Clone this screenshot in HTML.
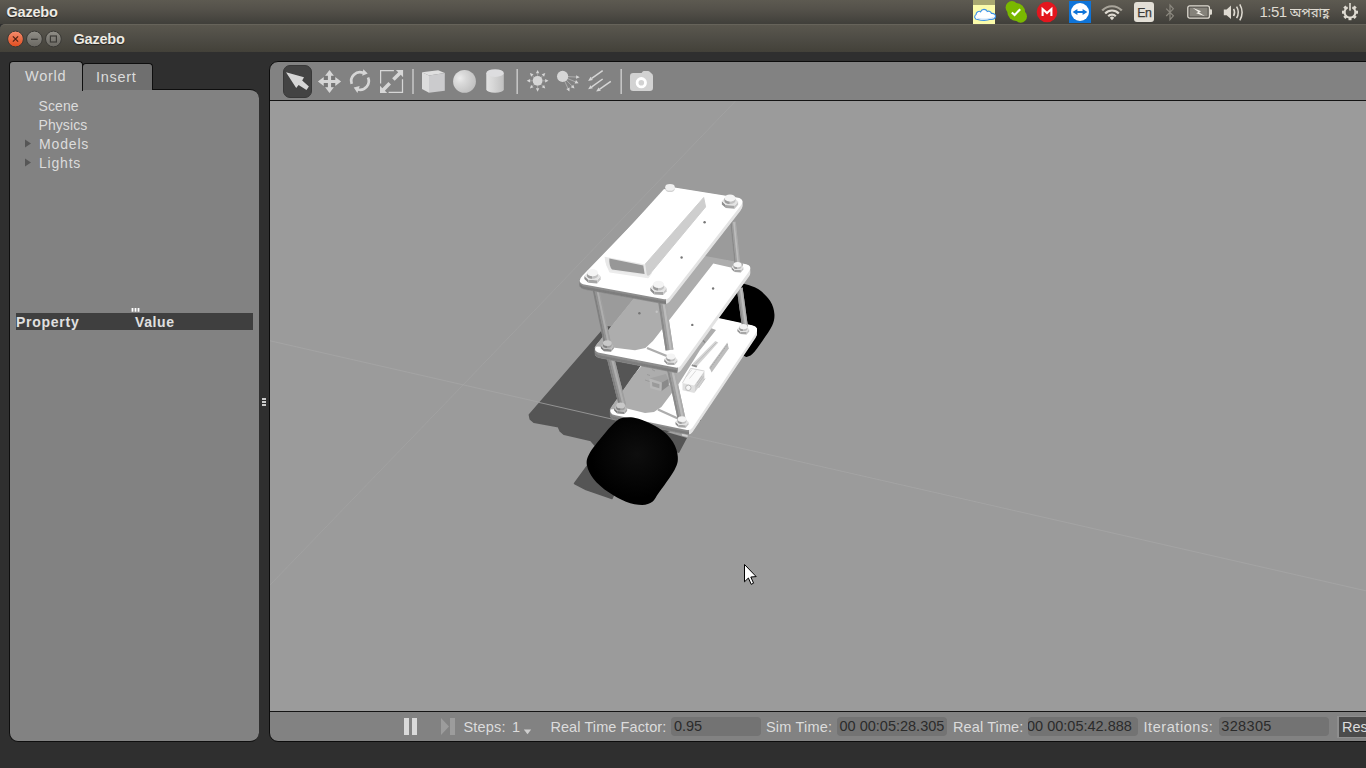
<!DOCTYPE html>
<html lang="en">
<head>
<meta charset="utf-8">
<title>Gazebo</title>
<style>
*{box-sizing:border-box;margin:0;padding:0}
html,body{width:1366px;height:768px;overflow:hidden;background:#2f2f2f}
body{position:relative;font-family:"Liberation Sans","DejaVu Sans",sans-serif;font-size:14px;color:#dcdcdc;-webkit-font-smoothing:antialiased}
.abs{position:absolute}
.t{position:absolute;white-space:nowrap;line-height:1}
#topbar{position:absolute;left:0;top:0;width:1366px;height:24px;background:linear-gradient(#5d5a51,#54514a 40%,#403f3a)}
#titlebar{position:absolute;left:0;top:24px;width:1366px;height:28px;background:linear-gradient(#5a574e,#4e4c45 50%,#434139);border-top:1px solid #66635a;border-radius:5px 0 0 0}
.wtitle{font-weight:bold;color:#eeebe4;text-shadow:0 1px 1px rgba(0,0,0,.55)}
/* left panel */
#pane{position:absolute;left:9px;top:89px;width:250px;height:653px;background:#828282;border:1px solid #0e0e0e;border-right:none;border-radius:0 9px 9px 9px}
.tab{position:absolute;border:1px solid #0e0e0e;border-bottom:none;border-radius:4px 4px 0 0}
#tabW{left:9px;top:61px;width:74px;height:30px;background:#828282}
#tabI{left:82px;top:63px;width:71px;height:27px;background:#6f6f6f}
#phead{position:absolute;left:16px;top:313px;width:237px;height:17px;background:#3f3f3f}
/* render frame */
#frame{position:absolute;left:269px;top:61px;width:1110px;height:681px;background:#828282;border:1px solid #0c0c0c;border-radius:9px;overflow:hidden}
#scene{position:absolute;left:0;top:39px;width:1108px;height:610px;background:#9b9b9b}
.hl{position:absolute;left:0;width:1108px;height:1px;background:#141414}
.bl{font-size:14.5px;color:#dcdcdc}
.fld{font-size:14.5px;position:absolute;top:655px;height:19px;background:#737373;border-radius:4px;color:#2b2b2b}
</style>
</head>
<body>
<div id="topbar">
  <span class="t wtitle" id="tt1" style="letter-spacing:-0.2px;margin-left:0.5px;left:6px;top:5px;font-size:14.5px">Gazebo</span>
  <!-- cloud indicator -->
  <div class="abs" style="left:973px;top:0;width:22px;height:24px;background:#fbfbaa"></div>
  <div class="abs" style="left:973px;top:0;width:22px;height:5px;background:#a9a870"></div>
  <svg class="abs" style="left:973px;top:5px" width="23" height="19" viewBox="0 0 23 19">
    <path d="M4.5 14.5 C1.5 14.5 0.8 11 3 9.6 C3.2 6.8 6 5.6 7.6 6.8 C8.8 3.6 13 3.6 14.2 6.4 C16 5.6 18.2 6.6 18.4 8.4 C21.4 8.2 23 10.2 22.4 12 C21.8 14 19.5 14.6 17.5 14.3 C14 15.6 8 15.4 4.5 14.5Z" fill="#fff" stroke="#3d93e6" stroke-width="1.1"/>
    <path d="M4 12.5 C8 14 16 14 21 11.5 C20.6 13.4 18.5 13.9 17.4 13.6 C14 14.9 8 14.7 4.6 13.8Z" fill="#cfe3f7"/>
  </svg>
  <!-- green status blob -->
  <svg class="abs" style="left:1004px;top:0" width="24" height="24" viewBox="0 0 24 24">
    <g fill="#7ab800"><circle cx="12.200" cy="12" r="8.900"/><circle cx="7.900" cy="7.400" r="6.300"/><circle cx="16.700" cy="16.400" r="6.300"/></g>
    <path d="M7.8 12.4 L10.6 15 L16.2 9.2" fill="none" stroke="#fff" stroke-width="2.1"/>
  </svg>
  <!-- red M -->
  <svg class="abs" style="left:1036px;top:1px" width="22" height="22" viewBox="0 0 22 22">
    <circle cx="11" cy="11" r="10.3" fill="#e3161e"/>
    <path d="M6.6 15 V8 L11 12 L15.4 8 V15" fill="none" stroke="#fff" stroke-width="2.1" stroke-linejoin="miter"/>
  </svg>
  <!-- teamviewer -->
  <svg class="abs" style="left:1069px;top:1px" width="22" height="22" viewBox="0 0 22 22">
    <rect width="22" height="22" fill="#0f74d8"/>
    <circle cx="11" cy="11" r="9" fill="#fff"/>
    <path d="M3.6 11 L8.4 8 V10 H13.6 V8 L18.4 11 L13.6 14 V12 H8.4 V14Z" fill="#0f74d8"/>
  </svg>
  <!-- wifi -->
  <svg class="abs" style="left:1101px;top:4px" width="22" height="17" viewBox="0 0 22 17">
    <g fill="none" stroke-linecap="butt">
      <path d="M1.2 6.6 A13.2 13.2 0 0 1 20.8 6.6" stroke="#a9a59b" stroke-width="2.2"/>
      <path d="M4.2 9.4 A9.4 9.4 0 0 1 17.8 9.4" stroke="#dfdbd2" stroke-width="2.2"/>
      <path d="M7.2 12.2 A5.4 5.4 0 0 1 14.8 12.2" stroke="#dfdbd2" stroke-width="2.2"/>
    </g>
    <path d="M8.8 13.8 A3 3 0 0 1 13.2 13.8 L11 16.2Z" fill="#dfdbd2"/>
  </svg>
  <!-- En -->
  <div class="abs" style="left:1134px;top:2px;width:20px;height:20px;background:#e3dfd6;border-radius:3px"></div>
  <span class="t" style="left:1137.2px;top:6.5px;font-size:12.3px;color:#3c3b37;letter-spacing:-0.4px;-webkit-text-stroke:0.25px #3c3b37">En</span>
  <!-- bluetooth -->
  <svg class="abs" style="left:1164px;top:3px" width="12" height="19" viewBox="0 0 12 19">
    <path d="M2.2 5.6 L9.4 12.8 L6 16.6 V2 L9.4 5.8 L2.2 13" fill="none" stroke="#8b887f" stroke-width="1.2"/>
  </svg>
  <!-- battery -->
  <svg class="abs" style="left:1187px;top:5px" width="26" height="14" viewBox="0 0 26 14">
    <rect x="0.8" y="0.8" width="21.6" height="12.4" rx="2" fill="#504e48" stroke="#dfdbd2" stroke-width="1.3"/>
    <rect x="2.6" y="2.6" width="18" height="8.8" fill="#85827a"/>
    <path d="M22.8 4.2 H24 Q25 4.2 25 5.2 V8.8 Q25 9.8 24 9.8 H22.8Z" fill="#dfdbd2"/>
    <path d="M5.6 2.8 L14.2 6.2 L12 7.3 L18 11.2 L9.2 8.2 L11.4 7Z" fill="#f4f1ea"/>
  </svg>
  <!-- volume -->
  <svg class="abs" style="left:1223px;top:3px" width="22" height="19" viewBox="0 0 22 19">
    <path d="M0.8 6.6 H3.6 L8 2.6 V16 L3.6 12.2 H0.8Z" fill="#dfdbd2"/>
    <g fill="none" stroke="#dfdbd2" stroke-width="1.5">
      <path d="M10.6 5.8 Q12.6 9.4 10.6 13"/>
      <path d="M13.6 3.6 Q17 9.4 13.6 15.2"/>
      <path d="M16.8 1.4 Q21.4 9.4 16.8 17.4"/>
    </g>
  </svg>
  <span class="t" id="clock" style="left:1259.5px;top:4px;font-size:15px;letter-spacing:-0.55px;color:#dfdbd2">1:51</span>
  <span class="t" id="bn" style="left:1289.5px;top:4px;font-size:13.2px;color:#dfdbd2;font-family:'Liberation Sans','Noto Sans Bengali','FreeSans','DejaVu Sans',sans-serif;line-height:18px;width:42px;height:19px;overflow:hidden">অপরাহ্ণ</span>
  <!-- power cog -->
  <svg class="abs" style="left:1340px;top:2px" width="20" height="20" viewBox="0 0 20 20">
    <g transform="translate(10 10.2)">
      <g fill="#dfdbd2">
        <rect x="-1.5" y="-8" width="3" height="3.4" transform="rotate(45)"/>
        <rect x="-1.5" y="-8" width="3" height="3.4" transform="rotate(90)"/>
        <rect x="-1.5" y="-8" width="3" height="3.4" transform="rotate(135)"/>
        <rect x="-1.5" y="-8" width="3" height="3.4" transform="rotate(180)"/>
        <rect x="-1.5" y="-8" width="3" height="3.4" transform="rotate(225)"/>
        <rect x="-1.5" y="-8" width="3" height="3.4" transform="rotate(270)"/>
        <rect x="-1.5" y="-8" width="3" height="3.4" transform="rotate(315)"/>
      </g>
      <path d="M-2.400 -4.900 A5.450 5.450 0 1 0 2.400 -4.900" fill="none" stroke="#dfdbd2" stroke-width="1.900"/>
      <rect x="-0.800" y="-9.200" width="1.600" height="7.600" fill="#dfdbd2"/>
    </g>
  </svg>
</div>
<div id="titlebar">
  <svg class="abs" style="left:6px;top:5px" width="58" height="18" viewBox="0 0 58 18">
    <defs>
      <linearGradient id="gc" x1="0" y1="0" x2="0" y2="1"><stop offset="0" stop-color="#f58d6e"/><stop offset="1" stop-color="#df4c1e"/></linearGradient>
      <linearGradient id="gg" x1="0" y1="0" x2="0" y2="1"><stop offset="0" stop-color="#918f88"/><stop offset="1" stop-color="#6a6862"/></linearGradient>
    </defs>
    <circle cx="9.5" cy="9" r="7.9" fill="url(#gc)" stroke="#3a3935" stroke-width="1"/>
    <path d="M6.9 6.4 L12.1 11.6 M12.1 6.4 L6.9 11.6" stroke="#4e2214" stroke-width="1.3"/>
    <circle cx="28.4" cy="9" r="7.9" fill="url(#gg)" stroke="#3a3935" stroke-width="1"/>
    <path d="M25 9.3 H31.8" stroke="#3c3b37" stroke-width="1.3"/>
    <circle cx="47.4" cy="9" r="7.9" fill="url(#gg)" stroke="#3a3935" stroke-width="1"/>
    <rect x="44.4" y="6" width="6" height="6" fill="none" stroke="#3c3b37" stroke-width="1.2"/>
  </svg>
  <span class="t wtitle" id="tt2" style="letter-spacing:-0.2px;margin-left:0.5px;left:73px;top:7px;font-size:14.5px">Gazebo</span>
</div>
<div id="pane"></div>
<div id="tabI" class="tab"></div>
<div id="tabW" class="tab"></div>
<span class="t" id="lw" style="letter-spacing:0.75px;left:25px;top:69px;font-size:14.5px">World</span>
<span class="t" id="li" style="letter-spacing:0.7px;left:96px;top:70px;font-size:14.5px">Insert</span>
<span class="t tr" id="t1" style="letter-spacing:0.1px;margin-left:-0.5px;left:39px;top:99px">Scene</span>
<span class="t tr" id="t2" style="letter-spacing:0.08px;margin-left:-0.5px;left:39px;top:118px">Physics</span>
<span class="t tr" id="t3" style="letter-spacing:0.84px;left:39px;top:137px">Models</span>
<span class="t tr" id="t4" style="letter-spacing:0.8px;left:39px;top:156px">Lights</span>
<svg class="abs" style="left:24px;top:138px" width="8" height="30" viewBox="0 0 8 30"><path d="M1 1.5 L7 5.5 L1 9.5Z M1 20.5 L7 24.5 L1 28.5Z" fill="#565656"/></svg>
<svg class="abs" style="left:131px;top:308px" width="9" height="4" viewBox="0 0 9 4"><path d="M1.5 0V3.8 M4.5 0V3.8 M7.5 0V3.8" stroke="#ffffff" stroke-width="1.8"/></svg>
<svg class="abs" style="left:262px;top:398px" width="4" height="8" viewBox="0 0 4 8"><path d="M0 1H4 M0 4H4 M0 7H4" stroke="#ffffff" stroke-width="1.5"/></svg>
<div id="phead"></div>
<span class="t" id="hp" style="letter-spacing:0.73px;left:16px;top:315px;font-weight:bold;font-size:14px;color:#e0e0e0">Property</span>
<span class="t" id="hv" style="letter-spacing:0.6px;left:135px;top:315px;font-weight:bold;font-size:14px;color:#e0e0e0">Value</span>
<div id="frame">
  <div id="scene"><!--SCENE_START--><svg class="abs" style="left:0;top:0" width="1108" height="610" viewBox="270 101 1108 610">
<defs>
<radialGradient id="gw" cx="0.55" cy="0.42" r="0.5"><stop offset="0" stop-color="#0e0e0e"/><stop offset="1" stop-color="#000"/></radialGradient>
<clipPath id="c_top"><path d="M581.6 276.1 Q574.6 283.4 584.6 285.3 L664.3 300.2 Q667.6 300.8 669.6 298.1 L741.2 205.8 Q746.9 198.5 737.8 197.0 L671.4 186.0 Q668.6 185.5 666.6 187.6 Z"/></clipPath>
<clipPath id="c_mid"><path d="M596.3 344.7 Q590.6 351.8 599.5 353.5 L675.4 368.5 Q678.9 369.2 680.9 366.3 L749.3 272.1 Q754.4 265.0 745.8 263.4 L676.0 250.6 Q672.8 250.0 670.7 252.5 Z"/></clipPath>
<clipPath id="c_bot"><path d="M611.1 407.3 Q606.3 414.1 614.5 415.8 L687.0 430.8 Q690.6 431.6 692.7 428.5 L756.4 333.2 Q760.9 326.5 753.0 324.8 L683.5 309.6 Q679.9 308.8 677.8 311.8 Z"/></clipPath>
<clipPath id="k_top"><path d="M565.5 271.0 L666.0 287.8 L666.0 319.8 L565.5 319.8Z"/></clipPath>
<clipPath id="k_mid"><path d="M581.5 339.3 L677.3 356.2 L677.3 388.2 L581.5 388.2Z"/></clipPath>
<clipPath id="k_bot"><path d="M597.2 401.6 L689.0 418.6 L689.0 450.6 L597.2 450.6Z"/></clipPath>
</defs>
<path d="M270 340.800 L1380 594" stroke="#ababab" stroke-width="0.8" fill="none" opacity="0.7"/>
<path d="M735.500 101 L463 385 L270 585" stroke="#a8a8a8" stroke-width="0.8" fill="none" opacity="0.6"/>
<path d="M606.0 327.0 L529.6 414.8 L530.5 419.0 L534.0 422.0 L558.5 426.6 L560.5 431.0 L564.0 434.0 L591.0 440.3 L596.0 446.0 L640.0 440.0 L700.0 420.0 L700.0 360.0 L640.0 330.0 Z" fill="#555555" stroke="#555555" stroke-width="2" stroke-linejoin="round"/>
<path d="M538 402.200 L616 420" stroke="#9a9a9a" stroke-width="0.9" fill="none"/>
<path d="M588.0 465.0 L574.5 483.5 L586.0 489.5 L612.0 498.5 L620.0 480.0Z" fill="#555555" stroke="#555555" stroke-width="1.5" stroke-linejoin="round"/>
<path d="M660.0 430.0 L687.0 438.0 L679.0 453.0 L668.0 450.0Z" fill="#555555" />
<path d="M681.5 431.0 L687.8 432.5 L687.6 437.0 L682.0 435.8Z" fill="#cfcfcf" />
<path d="M736.0 282.0 C740.7 279.2 739.5 282.3 743.3 283.5 C747.0 284.7 754.0 286.4 758.5 289.3 C763.0 292.2 767.6 296.9 770.2 301.0 C772.9 305.1 774.1 309.8 774.4 313.9 C774.7 318.0 774.0 321.4 772.1 325.7 C770.2 330.0 766.2 335.2 763.2 339.7 C760.2 344.2 756.3 349.8 753.8 352.6 C751.2 355.4 749.8 356.2 747.9 356.6 C746.0 357.0 747.2 357.8 742.6 355.0 C738.0 352.2 724.6 349.2 720.0 340.0 C715.4 330.8 712.3 309.7 715.0 300.0 C717.7 290.3 731.3 284.8 736.0 282.0Z" fill="#000"/>
<g id="bot"><path d="M612.0 411.1 Q607.2 418.0 615.4 419.7 L686.9 434.3 Q690.5 435.0 692.6 431.9 L755.5 338.1 Q760.0 331.4 752.1 329.7 L683.6 315.0 Q680.0 314.2 677.9 317.2 Z" fill="#e3e3e3"/><path d="M612.0 410.1 Q607.2 417.0 615.4 418.7 L686.9 433.3 Q690.5 434.0 692.6 430.9 L755.5 337.1 Q760.0 330.4 752.1 328.7 L683.6 314.0 Q680.0 313.2 677.9 316.2 Z" fill="#e3e3e3"/><path d="M612.0 409.1 Q607.2 416.0 615.4 417.7 L686.9 432.3 Q690.5 433.0 692.6 429.9 L755.5 336.1 Q760.0 329.4 752.1 327.7 L683.6 313.0 Q680.0 312.2 677.9 315.2 Z" fill="#e3e3e3"/><path d="M612.0 408.1 Q607.2 415.0 615.4 416.7 L686.9 431.3 Q690.5 432.0 692.6 428.9 L755.5 335.1 Q760.0 328.4 752.1 326.7 L683.6 312.0 Q680.0 311.2 677.9 314.2 Z" fill="#e3e3e3"/><path d="M612.0 407.1 Q607.2 414.0 615.4 415.7 L686.9 430.3 Q690.5 431.0 692.6 427.9 L755.5 334.1 Q760.0 327.4 752.1 325.7 L683.6 311.0 Q680.0 310.2 677.9 313.2 Z" fill="#e3e3e3"/><g clip-path="url(#k_bot)"><path d="M612.0 411.1 Q607.2 418.0 615.4 419.7 L686.9 434.3 Q690.5 435.0 692.6 431.9 L755.5 338.1 Q760.0 331.4 752.1 329.7 L683.6 315.0 Q680.0 314.2 677.9 317.2 Z" fill="#7e7e7e" stroke="#7e7e7e" stroke-width="0.7"/><path d="M612.0 410.1 Q607.2 417.0 615.4 418.7 L686.9 433.3 Q690.5 434.0 692.6 430.9 L755.5 337.1 Q760.0 330.4 752.1 328.7 L683.6 314.0 Q680.0 313.2 677.9 316.2 Z" fill="#7e7e7e" stroke="#7e7e7e" stroke-width="0.7"/><path d="M612.0 409.1 Q607.2 416.0 615.4 417.7 L686.9 432.3 Q690.5 433.0 692.6 429.9 L755.5 336.1 Q760.0 329.4 752.1 327.7 L683.6 313.0 Q680.0 312.2 677.9 315.2 Z" fill="#7e7e7e" stroke="#7e7e7e" stroke-width="0.7"/><path d="M612.0 408.1 Q607.2 415.0 615.4 416.7 L686.9 431.3 Q690.5 432.0 692.6 428.9 L755.5 335.1 Q760.0 328.4 752.1 326.7 L683.6 312.0 Q680.0 311.2 677.9 314.2 Z" fill="#8e8e8e" stroke="#8e8e8e" stroke-width="0.7"/><path d="M612.0 407.1 Q607.2 414.0 615.4 415.7 L686.9 430.3 Q690.5 431.0 692.6 427.9 L755.5 334.1 Q760.0 327.4 752.1 325.7 L683.6 311.0 Q680.0 310.2 677.9 313.2 Z" fill="#8e8e8e" stroke="#8e8e8e" stroke-width="0.7"/></g><path d="M612.0 406.7 Q607.2 413.6 615.4 415.3 L686.9 429.9 Q690.5 430.6 692.6 427.5 L755.5 333.7 Q760.0 327.0 752.1 325.3 L683.6 310.6 Q680.0 309.8 677.9 312.8 Z" fill="#ffffff"/></g>
<g clip-path="url(#c_bot)">
<path d="M640.4 367.2 L600.0 412.0 L609.0 409.5 L627.0 408.4 L645.0 412.9 L654.0 412.0 L661.4 407.0 L670.4 395.0 L678.0 385.0 L683.0 377.0 L690.0 366.0 L700.0 350.0 L716.0 330.0 L690.0 320.0Z" fill="#adadad" />
<path d="M658 409.500 L679 419" stroke="#adadad" stroke-width="2.4" fill="none"/>
</g>
<path d="M649.4 378.4 L665.9 373.9 L668.2 379.0 L661.7 382.6Z" fill="#a2a2a2" />
<path d="M661.7 382.6 L668.2 379.0 L668.9 385.5 L661.4 391.2Z" fill="#8a8a8a" />
<path d="M649.4 378.4 L661.7 382.6 L661.4 391.2 L650.2 388.2Z" fill="#b6b6b6" />
<path d="M652.0 382.0 L659.5 384.2 L659.3 388.2 L652.4 386.3Z" fill="#9a9a9a" />
<path d="M645 380 L649.500 381.500 M652 369.500 L655 371 M647 374.500 L650 375.500" stroke="#9a9a9a" stroke-width="1" fill="none"/>
<path d="M669 384 L674 385.300" stroke="#c9c9c9" stroke-width="2" fill="none"/>
<path d="M682.5 382.9 L690.7 368.3 L704.4 371.0 L694.3 385.6Z" fill="#fafafa" />
<path d="M694.3 385.6 L704.4 371.0 L704.4 379.2 L694.3 392.9Z" fill="#d0d0d0" />
<path d="M682.5 382.9 L694.3 385.6 L694.3 392.9 L682.5 390.2Z" fill="#e0e0e0" />
<path d="M682.5 382.9 L690.7 368.3 L704.4 371" stroke="#c4c4c4" stroke-width="0.7" fill="none"/>
<circle cx="688.300" cy="387.800" r="2.700" fill="#f6f6f6" stroke="#b4b4b4" stroke-width="0.9"/>
<path d="M696.500 386.500 L703.500 376.500 M698.500 388 L705 378.500 M697 383 L702 376" stroke="#b8b8b8" stroke-width="0.8" fill="none"/>
<path d="M686 377 L692 369.500 M689.500 378.500 L696 370.500" stroke="#d2d2d2" stroke-width="0.8" fill="none"/>
<path d="M692.9 363.5 L715.3 341.0 L718.3 342.5 L704.9 357.5 L695.9 367.2Z" fill="#d4d4d4" />
<path d="M695 364.500 L716.500 342.500" stroke="#b5b5b5" stroke-width="0.8" fill="none"/>
<path d="M709.3 367.2 L727.3 342.5 L728.8 348.5 L711.6 372.4Z" fill="#bebebe" />
<path d="M710 368.500 L727.800 344" stroke="#9f9f9f" stroke-width="0.9" stroke-dasharray="1.2 1" fill="none"/>
<path d="M692.1 364.2 L697.4 365.7 L696.5 367.5 L691.5 366.0Z" fill="#8d8d8d" />
<path d="M702.500 340 L705 342.500" stroke="#8a8a8a" stroke-width="1.2" fill="none"/>
<path d="M736.8 288.4 L742.6 287.6 L747.9 326.6 L742.1 327.4Z" fill="#a8a8a8" /><path d="M736.8 288.4 L738.4 288.2 L743.7 327.2 L742.1 327.4Z" fill="#8a8a8a" /><path d="M738.4 288.2 L739.8 288.0 L745.1 327.0 L743.7 327.2Z" fill="#9e9e9e" /><path d="M739.8 288.0 L741.6 287.7 L746.9 326.7 L745.1 327.0Z" fill="#bcbcbc" /><path d="M741.6 287.7 L742.6 287.6 L747.9 326.6 L746.9 326.7Z" fill="#acacac" />
<path d="M606.8 357.9 L613.8 356.1 L626.0 404.5 L619.0 406.3Z" fill="#9c9c9c" /><path d="M606.8 357.9 L608.7 357.4 L620.9 405.8 L619.0 406.3Z" fill="#808080" /><path d="M608.7 357.4 L610.5 357.0 L622.7 405.4 L620.9 405.8Z" fill="#929292" /><path d="M610.5 357.0 L612.6 356.4 L624.8 404.8 L622.7 405.4Z" fill="#aeaeae" /><path d="M612.6 356.4 L613.8 356.1 L626.0 404.5 L624.8 404.8Z" fill="#9f9f9f" />
<path d="M667.0 369.8 L674.6 368.2 L685.4 418.1 L677.8 419.7Z" fill="#a8a8a8" /><path d="M667.0 369.8 L669.1 369.4 L679.9 419.3 L677.8 419.7Z" fill="#8a8a8a" /><path d="M669.1 369.4 L671.0 369.0 L681.8 418.9 L679.9 419.3Z" fill="#9e9e9e" /><path d="M671.0 369.0 L673.3 368.5 L684.1 418.4 L681.8 418.9Z" fill="#bcbcbc" /><path d="M673.3 368.5 L674.6 368.2 L685.4 418.1 L684.1 418.4Z" fill="#acacac" />
<path d="M737.4 329.0 L740.3 331.7 L740.3 334.0 L737.4 331.3Z" fill="#8e8e8e" /><path d="M740.3 331.7 L746.7 332.1 L746.7 334.4 L740.3 334.0Z" fill="#a6a6a6" /><path d="M746.7 332.1 L749.2 329.3 L749.2 331.5 L746.7 334.4Z" fill="#c6c6c6" /><path d="M737.4 329.0 L740.1 326.0 L746.3 326.4 L749.2 329.3 L746.7 332.1 L740.3 331.7Z" fill="#e4e4e4" /><path d="M739.3 328.4 A4.0 2.7 0 0 0 747.3 328.4 V326.6 A4.0 2.7 0 0 1 739.3 326.6Z" fill="#c2c2c2"/><path d="M739.3 328.4 A4.0 2.7 0 0 0 742.9 331.1 V326.6 H739.3Z" fill="#9c9c9c"/><ellipse cx="743.3" cy="326.6" rx="4.0" ry="2.7" fill="#f4f4f4"/>
<path d="M614.1 408.0 L617.2 411.1 L617.2 413.6 L614.1 410.5Z" fill="#747474" /><path d="M617.2 411.1 L624.4 411.5 L624.4 414.0 L617.2 413.6Z" fill="#888888" /><path d="M624.4 411.5 L627.1 408.3 L627.1 410.9 L624.4 414.0Z" fill="#a2a2a2" /><path d="M614.1 408.0 L617.0 404.8 L624.0 405.2 L627.1 408.3 L624.4 411.5 L617.2 411.1Z" fill="#bababa" /><path d="M616.2 407.4 A4.4 2.9 0 0 0 625.0 407.4 V405.4 A4.4 2.9 0 0 1 616.2 405.4Z" fill="#9f9f9f"/><path d="M616.2 407.4 A4.4 2.9 0 0 0 620.2 410.3 V405.4 H616.2Z" fill="#7f7f7f"/><ellipse cx="620.6" cy="405.4" rx="4.4" ry="2.9" fill="#c8c8c8"/>
<path d="M675.5 421.7 L678.6 424.8 L678.6 427.3 L675.5 424.2Z" fill="#8e8e8e" /><path d="M678.6 424.8 L685.8 425.2 L685.8 427.7 L678.6 427.3Z" fill="#a6a6a6" /><path d="M685.8 425.2 L688.5 422.0 L688.5 424.6 L685.8 427.7Z" fill="#c6c6c6" /><path d="M675.5 421.7 L678.4 418.5 L685.4 418.9 L688.5 422.0 L685.8 425.2 L678.6 424.8Z" fill="#e4e4e4" /><path d="M677.6 421.1 A4.4 2.9 0 0 0 686.4 421.1 V419.1 A4.4 2.9 0 0 1 677.6 419.1Z" fill="#c2c2c2"/><path d="M677.6 421.1 A4.4 2.9 0 0 0 681.6 424.0 V419.1 H677.6Z" fill="#9c9c9c"/><ellipse cx="682.0" cy="419.1" rx="4.4" ry="2.9" fill="#f4f4f4"/>
<g id="mid"><path d="M597.3 349.2 Q591.5 356.3 600.5 358.0 L675.4 372.5 Q678.8 373.2 680.9 370.4 L748.3 277.6 Q753.5 270.5 744.9 268.9 L676.0 256.6 Q672.8 256.0 670.8 258.5 Z" fill="#e3e3e3"/><path d="M597.3 348.2 Q591.5 355.3 600.5 357.0 L675.4 371.5 Q678.8 372.2 680.9 369.4 L748.3 276.6 Q753.5 269.5 744.9 267.9 L676.0 255.6 Q672.8 255.0 670.8 257.5 Z" fill="#e3e3e3"/><path d="M597.3 347.2 Q591.5 354.3 600.5 356.0 L675.4 370.5 Q678.8 371.2 680.9 368.4 L748.3 275.6 Q753.5 268.5 744.9 266.9 L676.0 254.6 Q672.8 254.0 670.8 256.5 Z" fill="#e3e3e3"/><path d="M597.3 346.2 Q591.5 353.3 600.5 355.0 L675.4 369.5 Q678.8 370.2 680.9 367.4 L748.3 274.6 Q753.5 267.5 744.9 265.9 L676.0 253.6 Q672.8 253.0 670.8 255.5 Z" fill="#e3e3e3"/><path d="M597.3 345.2 Q591.5 352.3 600.5 354.0 L675.4 368.5 Q678.8 369.2 680.9 366.4 L748.3 273.6 Q753.5 266.5 744.9 264.9 L676.0 252.6 Q672.8 252.0 670.8 254.5 Z" fill="#e3e3e3"/><path d="M597.3 344.2 Q591.5 351.3 600.5 353.0 L675.4 367.5 Q678.8 368.2 680.9 365.4 L748.3 272.6 Q753.5 265.5 744.9 263.9 L676.0 251.6 Q672.8 251.0 670.8 253.5 Z" fill="#e3e3e3"/><g clip-path="url(#k_mid)"><path d="M597.3 349.2 Q591.5 356.3 600.5 358.0 L675.4 372.5 Q678.8 373.2 680.9 370.4 L748.3 277.6 Q753.5 270.5 744.9 268.9 L676.0 256.6 Q672.8 256.0 670.8 258.5 Z" fill="#7e7e7e" stroke="#7e7e7e" stroke-width="0.7"/><path d="M597.3 348.2 Q591.5 355.3 600.5 357.0 L675.4 371.5 Q678.8 372.2 680.9 369.4 L748.3 276.6 Q753.5 269.5 744.9 267.9 L676.0 255.6 Q672.8 255.0 670.8 257.5 Z" fill="#7e7e7e" stroke="#7e7e7e" stroke-width="0.7"/><path d="M597.3 347.2 Q591.5 354.3 600.5 356.0 L675.4 370.5 Q678.8 371.2 680.9 368.4 L748.3 275.6 Q753.5 268.5 744.9 266.9 L676.0 254.6 Q672.8 254.0 670.8 256.5 Z" fill="#7e7e7e" stroke="#7e7e7e" stroke-width="0.7"/><path d="M597.3 346.2 Q591.5 353.3 600.5 355.0 L675.4 369.5 Q678.8 370.2 680.9 367.4 L748.3 274.6 Q753.5 267.5 744.9 265.9 L676.0 253.6 Q672.8 253.0 670.8 255.5 Z" fill="#8e8e8e" stroke="#8e8e8e" stroke-width="0.7"/><path d="M597.3 345.2 Q591.5 352.3 600.5 354.0 L675.4 368.5 Q678.8 369.2 680.9 366.4 L748.3 273.6 Q753.5 266.5 744.9 264.9 L676.0 252.6 Q672.8 252.0 670.8 254.5 Z" fill="#8e8e8e" stroke="#8e8e8e" stroke-width="0.7"/><path d="M597.3 344.2 Q591.5 351.3 600.5 353.0 L675.4 367.5 Q678.8 368.2 680.9 365.4 L748.3 272.6 Q753.5 265.5 744.9 263.9 L676.0 251.6 Q672.8 251.0 670.8 253.5 Z" fill="#8e8e8e" stroke="#8e8e8e" stroke-width="0.7"/></g><path d="M597.3 344.2 Q591.5 351.3 600.5 353.0 L675.4 367.5 Q678.8 368.2 680.9 365.4 L748.3 272.6 Q753.5 265.5 744.9 263.9 L676.0 251.6 Q672.8 251.0 670.8 253.5 Z" fill="#ffffff"/></g>
<g clip-path="url(#c_mid)">
<path d="M630.4 300.4 L585.0 352.0 L597.0 346.5 L612.5 347.5 L635.0 350.3 L645.4 348.0 L652.9 341.0 L713.3 263.5 L733.0 268.0 L742.0 268.0 L745.0 258.0 L672.8 245.0Z" fill="#adadad" />
<path d="M647 348 L668 356.500" stroke="#adadad" stroke-width="2.4" fill="none"/>
</g>
<circle cx="713.1" cy="288.5" r="1.200" fill="#777"/>
<circle cx="692.3" cy="324.9" r="1.200" fill="#777"/>
<circle cx="639.4" cy="313.2" r="1.200" fill="#757575"/>
<circle cx="656.7" cy="311.7" r="1.200" fill="#c4c4c4"/>
<path d="M730.2 222.3 L735.8 221.7 L740.3 265.7 L734.7 266.3Z" fill="#a8a8a8" /><path d="M730.2 222.3 L731.7 222.1 L736.2 266.1 L734.7 266.3Z" fill="#8a8a8a" /><path d="M731.7 222.1 L733.1 222.0 L737.6 266.0 L736.2 266.1Z" fill="#9e9e9e" /><path d="M733.1 222.0 L734.8 221.8 L739.3 265.8 L737.6 266.0Z" fill="#bcbcbc" /><path d="M734.8 221.8 L735.8 221.7 L740.3 265.7 L739.3 265.8Z" fill="#acacac" />
<path d="M592.8 290.7 L599.6 289.3 L610.9 343.0 L604.1 344.4Z" fill="#9c9c9c" /><path d="M592.8 290.7 L594.7 290.3 L606.0 344.0 L604.1 344.4Z" fill="#808080" /><path d="M594.7 290.3 L596.4 290.0 L607.7 343.7 L606.0 344.0Z" fill="#929292" /><path d="M596.4 290.0 L598.4 289.5 L609.7 343.2 L607.7 343.7Z" fill="#aeaeae" /><path d="M598.4 289.5 L599.6 289.3 L610.9 343.0 L609.7 343.2Z" fill="#9f9f9f" />
<path d="M658.1 301.6 L665.9 300.4 L673.4 349.4 L665.6 350.6Z" fill="#a8a8a8" /><path d="M658.1 301.6 L660.3 301.3 L667.8 350.3 L665.6 350.6Z" fill="#8a8a8a" /><path d="M660.3 301.3 L662.2 301.0 L669.7 350.0 L667.8 350.3Z" fill="#9e9e9e" /><path d="M662.2 301.0 L664.5 300.6 L672.0 349.6 L669.7 350.0Z" fill="#bcbcbc" /><path d="M664.5 300.6 L665.9 300.4 L673.4 349.4 L672.0 349.6Z" fill="#acacac" />
<path d="M731.6 267.0 L734.5 269.7 L734.5 272.0 L731.6 269.3Z" fill="#8e8e8e" /><path d="M734.5 269.7 L740.9 270.1 L740.9 272.4 L734.5 272.0Z" fill="#a6a6a6" /><path d="M740.9 270.1 L743.4 267.3 L743.4 269.5 L740.9 272.4Z" fill="#c6c6c6" /><path d="M731.6 267.0 L734.3 264.0 L740.5 264.4 L743.4 267.3 L740.9 270.1 L734.5 269.7Z" fill="#e4e4e4" /><path d="M733.5 266.4 A4.0 2.7 0 0 0 741.5 266.4 V264.6 A4.0 2.7 0 0 1 733.5 264.6Z" fill="#c2c2c2"/><path d="M733.5 266.4 A4.0 2.7 0 0 0 737.1 269.1 V264.6 H733.5Z" fill="#9c9c9c"/><ellipse cx="737.5" cy="264.6" rx="4.0" ry="2.7" fill="#f4f4f4"/>
<path d="M600.8 345.7 L603.9 348.8 L603.9 351.3 L600.8 348.2Z" fill="#747474" /><path d="M603.9 348.8 L611.1 349.2 L611.1 351.7 L603.9 351.3Z" fill="#888888" /><path d="M611.1 349.2 L613.8 346.0 L613.8 348.6 L611.1 351.7Z" fill="#a2a2a2" /><path d="M600.8 345.7 L603.7 342.5 L610.7 342.9 L613.8 346.0 L611.1 349.2 L603.9 348.8Z" fill="#bababa" /><path d="M602.9 345.1 A4.4 2.9 0 0 0 611.7 345.1 V343.1 A4.4 2.9 0 0 1 602.9 343.1Z" fill="#9f9f9f"/><path d="M602.9 345.1 A4.4 2.9 0 0 0 606.9 348.0 V343.1 H602.9Z" fill="#7f7f7f"/><ellipse cx="607.3" cy="343.1" rx="4.4" ry="2.9" fill="#c8c8c8"/>
<path d="M664.3 359.1 L667.4 362.2 L667.4 364.7 L664.3 361.6Z" fill="#8e8e8e" /><path d="M667.4 362.2 L674.6 362.6 L674.6 365.1 L667.4 364.7Z" fill="#a6a6a6" /><path d="M674.6 362.6 L677.3 359.4 L677.3 362.0 L674.6 365.1Z" fill="#c6c6c6" /><path d="M664.3 359.1 L667.2 355.9 L674.2 356.3 L677.3 359.4 L674.6 362.6 L667.4 362.2Z" fill="#e4e4e4" /><path d="M666.4 358.5 A4.4 2.9 0 0 0 675.2 358.5 V356.5 A4.4 2.9 0 0 1 666.4 356.5Z" fill="#c2c2c2"/><path d="M666.4 358.5 A4.4 2.9 0 0 0 670.4 361.4 V356.5 H666.4Z" fill="#9c9c9c"/><ellipse cx="670.8" cy="356.5" rx="4.4" ry="2.9" fill="#f4f4f4"/>
<g id="top"><path d="M582.6 280.2 Q575.5 287.6 585.6 289.4 L664.2 303.8 Q667.5 304.4 669.5 301.8 L740.3 210.9 Q746.0 203.6 736.8 202.1 L671.3 191.6 Q668.5 191.1 666.5 193.2 Z" fill="#e3e3e3"/><path d="M582.6 279.2 Q575.5 286.6 585.6 288.4 L664.2 302.8 Q667.5 303.4 669.5 300.8 L740.3 209.9 Q746.0 202.6 736.8 201.1 L671.3 190.6 Q668.5 190.1 666.5 192.2 Z" fill="#e3e3e3"/><path d="M582.6 278.2 Q575.5 285.6 585.6 287.4 L664.2 301.8 Q667.5 302.4 669.5 299.8 L740.3 208.9 Q746.0 201.6 736.8 200.1 L671.3 189.6 Q668.5 189.1 666.5 191.2 Z" fill="#e3e3e3"/><path d="M582.6 277.2 Q575.5 284.6 585.6 286.4 L664.2 300.8 Q667.5 301.4 669.5 298.8 L740.3 207.9 Q746.0 200.6 736.8 199.1 L671.3 188.6 Q668.5 188.1 666.5 190.2 Z" fill="#e3e3e3"/><path d="M582.6 276.2 Q575.5 283.6 585.6 285.4 L664.2 299.8 Q667.5 300.4 669.5 297.8 L740.3 206.9 Q746.0 199.6 736.8 198.1 L671.3 187.6 Q668.5 187.1 666.5 189.2 Z" fill="#e3e3e3"/><g clip-path="url(#k_top)"><path d="M582.6 280.2 Q575.5 287.6 585.6 289.4 L664.2 303.8 Q667.5 304.4 669.5 301.8 L740.3 210.9 Q746.0 203.6 736.8 202.1 L671.3 191.6 Q668.5 191.1 666.5 193.2 Z" fill="#7e7e7e" stroke="#7e7e7e" stroke-width="0.7"/><path d="M582.6 279.2 Q575.5 286.6 585.6 288.4 L664.2 302.8 Q667.5 303.4 669.5 300.8 L740.3 209.9 Q746.0 202.6 736.8 201.1 L671.3 190.6 Q668.5 190.1 666.5 192.2 Z" fill="#7e7e7e" stroke="#7e7e7e" stroke-width="0.7"/><path d="M582.6 278.2 Q575.5 285.6 585.6 287.4 L664.2 301.8 Q667.5 302.4 669.5 299.8 L740.3 208.9 Q746.0 201.6 736.8 200.1 L671.3 189.6 Q668.5 189.1 666.5 191.2 Z" fill="#7e7e7e" stroke="#7e7e7e" stroke-width="0.7"/><path d="M582.6 277.2 Q575.5 284.6 585.6 286.4 L664.2 300.8 Q667.5 301.4 669.5 298.8 L740.3 207.9 Q746.0 200.6 736.8 199.1 L671.3 188.6 Q668.5 188.1 666.5 190.2 Z" fill="#8e8e8e" stroke="#8e8e8e" stroke-width="0.7"/><path d="M582.6 276.2 Q575.5 283.6 585.6 285.4 L664.2 299.8 Q667.5 300.4 669.5 297.8 L740.3 206.9 Q746.0 199.6 736.8 198.1 L671.3 187.6 Q668.5 187.1 666.5 189.2 Z" fill="#8e8e8e" stroke="#8e8e8e" stroke-width="0.7"/></g><path d="M582.6 275.6 Q575.5 283.0 585.6 284.8 L664.2 299.2 Q667.5 299.8 669.5 297.2 L740.3 206.3 Q746.0 199.0 736.8 197.5 L671.3 187.0 Q668.5 186.5 666.5 188.6 Z" fill="#ffffff"/></g>
<circle cx="704.6" cy="222.2" r="1.200" fill="#777"/>
<circle cx="681.6" cy="257.5" r="1.200" fill="#777"/>
<path d="M607.0 264.0 L610.0 271.5 L648.0 277.3 L651.0 273.0Z" fill="#ececec" stroke="#ececec" stroke-width="2" stroke-linejoin="round"/>
<path d="M664.0 189.0 L703.7 197.5 L705.6 206.9 L648.7 274.4 L611.0 270.0 L604.4 255.0Z" fill="#ffffff" />
<path d="M703.700 197.500 L705.600 206.900 L649 275 Q646.500 276 646 272.500 L645.400 264 Z" fill="#cecece" stroke="#cecece" stroke-width="1" stroke-linejoin="round"/>
<path d="M604.600 256.800 L645.400 264.500 L646.800 275.500 L611 270.800 Q605.500 268.500 604.600 256.800Z" fill="#e8e8e8"/>
<path d="M609.300 258.600 L643.300 265.500 L644.600 274 L612 269.600 Q609 266.500 609.300 258.600Z" fill="#979797"/>
<ellipse cx="670" cy="187.300" rx="4.800" ry="3.200" fill="#f0f0f0"/>
<path d="M665.300 188 A4.800 3.200 0 0 0 674.700 188 L674.700 189.500 A4.800 3.200 0 0 1 665.300 189.500Z" fill="#d2d2d2"/>
<path d="M721.9 201.2 L725.8 205.0 L725.8 208.1 L721.9 204.4Z" fill="#8e8e8e" /><path d="M725.8 205.0 L734.7 205.5 L734.7 208.7 L725.8 208.1Z" fill="#a6a6a6" /><path d="M734.7 205.5 L738.1 201.6 L738.1 204.8 L734.7 208.7Z" fill="#c6c6c6" /><path d="M721.9 201.2 L725.6 197.2 L734.2 197.7 L738.1 201.6 L734.7 205.5 L725.8 205.0Z" fill="#e4e4e4" /><path d="M724.5 200.5 A5.5 3.6 0 0 0 735.5 200.5 V198.0 A5.5 3.6 0 0 1 724.5 198.0Z" fill="#c2c2c2"/><path d="M724.5 200.5 A5.5 3.6 0 0 0 729.5 204.1 V198.0 H724.5Z" fill="#9c9c9c"/><ellipse cx="730.0" cy="198.0" rx="5.5" ry="3.6" fill="#f4f4f4"/>
<path d="M584.4 275.9 L588.3 279.7 L588.3 282.8 L584.4 279.1Z" fill="#8e8e8e" /><path d="M588.3 279.7 L597.2 280.2 L597.2 283.4 L588.3 282.8Z" fill="#a6a6a6" /><path d="M597.2 280.2 L600.6 276.3 L600.6 279.5 L597.2 283.4Z" fill="#c6c6c6" /><path d="M584.4 275.9 L588.1 271.9 L596.7 272.4 L600.6 276.3 L597.2 280.2 L588.3 279.7Z" fill="#e4e4e4" /><path d="M587.0 275.2 A5.5 3.6 0 0 0 598.0 275.2 V272.7 A5.5 3.6 0 0 1 587.0 272.7Z" fill="#c2c2c2"/><path d="M587.0 275.2 A5.5 3.6 0 0 0 592.0 278.8 V272.7 H587.0Z" fill="#9c9c9c"/><ellipse cx="592.5" cy="272.7" rx="5.5" ry="3.6" fill="#f4f4f4"/>
<path d="M650.4 287.6 L654.3 291.4 L654.3 294.5 L650.4 290.8Z" fill="#8e8e8e" /><path d="M654.3 291.4 L663.2 291.9 L663.2 295.1 L654.3 294.5Z" fill="#a6a6a6" /><path d="M663.2 291.9 L666.6 288.0 L666.6 291.2 L663.2 295.1Z" fill="#c6c6c6" /><path d="M650.4 287.6 L654.1 283.6 L662.7 284.1 L666.6 288.0 L663.2 291.9 L654.3 291.4Z" fill="#e4e4e4" /><path d="M653.0 286.9 A5.5 3.6 0 0 0 664.0 286.9 V284.4 A5.5 3.6 0 0 1 653.0 284.4Z" fill="#c2c2c2"/><path d="M653.0 286.9 A5.5 3.6 0 0 0 658.0 290.5 V284.4 H653.0Z" fill="#9c9c9c"/><ellipse cx="658.5" cy="284.4" rx="5.5" ry="3.6" fill="#f4f4f4"/>
<path d="M623.0 417.8 C626.9 417.1 631.6 416.7 637.7 418.5 C643.8 420.3 653.9 424.9 659.8 428.8 C665.7 432.7 670.0 437.3 673.0 442.0 C676.0 446.7 677.5 452.1 677.8 456.8 C678.0 461.5 677.8 463.9 674.5 470.0 C671.2 476.1 662.0 488.3 658.3 493.6 C654.6 498.9 655.1 499.8 652.4 501.7 C649.7 503.6 646.5 505.0 642.1 505.0 C637.7 505.0 631.6 503.8 626.0 501.7 C620.4 499.6 613.7 495.9 608.3 492.1 C602.9 488.3 597.1 483.3 593.6 478.9 C590.1 474.5 587.7 469.8 587.0 465.6 C586.3 461.4 586.6 458.8 589.2 453.9 C591.8 449.0 598.2 441.3 602.4 436.2 C606.6 431.1 610.8 426.1 614.2 423.0 C617.6 419.9 619.1 418.6 623.0 417.8Z" fill="url(#gw)"/>
<path d="M744.500 564.500 V581.800 L748.400 578 L751.200 584.300 L753.600 583.200 L750.800 577 L756.200 576.600Z" fill="#fff" stroke="#000" stroke-width="1" stroke-linejoin="miter"/>
</svg><!--SCENE_END--></div>
  <div class="hl" style="top:38px"></div>
  <div class="hl" style="top:649px"></div>
  <!-- toolbar (frame origin = 270,61) -->
  <div class="abs" style="left:13px;top:3px;width:29px;height:33px;background:#434343;border:1px solid #383838;border-radius:7px"></div>
  <svg class="abs" id="tb" style="left:0;top:-1px" width="420" height="39" viewBox="270 61 420 39">
    <g fill="#d6d6d6" stroke="none">
      <!-- select arrow -->
      <path d="M286 72.200 L304 77.200 L302.200 80.600 L308.900 86.600 L306.500 90 L298.600 84.900 L296.200 88.100Z"/>
      <!-- translate -->
      <rect x="324" y="76" width="11" height="11" fill="#777777"/>
      <path d="M329.5 69.9 L333.9 75.7 L331.1 75.7 L331.1 79.9 L335.3 79.9 L335.3 77.1 L341.1 81.5 L335.3 85.9 L335.3 83.1 L331.1 83.1 L331.1 87.3 L333.9 87.3 L329.5 93.1 L325.1 87.3 L327.9 87.3 L327.9 83.1 L323.7 83.1 L323.7 85.9 L317.9 81.5 L323.7 77.1 L323.7 79.9 L327.9 79.9 L327.9 75.7 L325.1 75.7Z"/>
      <!-- scale -->
      <path d="M403.10 70.00 L395.90 70.00 L398.23 72.33 L392.13 78.33 L394.67 80.87 L400.77 74.87 L403.10 77.20Z"/>
      <path d="M380.00 93.00 L387.20 93.00 L384.87 90.67 L390.97 84.57 L388.43 82.03 L382.33 88.13 L380.00 85.80Z"/>
    </g>
    <g fill="none" stroke="#d6d6d6">
      <path d="M380.600 83.500 V70.600 H393.900 M402.500 79.300 V92.400 H388.600" stroke-width="1.25"/>
      <!-- rotate -->
      <path d="M351.730 83.850 A8.750 8.750 0 0 1 363.200 72.850" stroke-width="2.700"/>
      <path d="M368.020 77.500 A8.750 8.750 0 0 1 358 89.550" stroke-width="2.700"/>
    </g>
    <path d="M363.300 69.300 L367.700 73.500 L362.200 75.700Z M353.700 87.400 L359.700 86.100 L357.400 92.900Z" fill="#d6d6d6"/>
    <defs>
      <radialGradient id="gs" cx="0.3" cy="0.36" r="0.8"><stop offset="0" stop-color="#ececec"/><stop offset="0.3" stop-color="#dadada"/><stop offset="1" stop-color="#bcbcbc"/></radialGradient>
      <linearGradient id="gy" x1="0" y1="0" x2="1" y2="0"><stop offset="0" stop-color="#e2e2e2"/><stop offset="0.35" stop-color="#d8d8d8"/><stop offset="1" stop-color="#c0c0c0"/></linearGradient>
    </defs>
    <!-- box -->
    <path d="M422 72.300 L438.100 70.200 L444.800 73.100 L429 75.600Z" fill="#dfdfdf"/>
    <path d="M422 72.300 L429 75.600 L429 92.800 L422 88.950Z" fill="#dcdcdc"/>
    <path d="M429 75.600 L444.800 73.100 V90.700 L429 92.800Z" fill="#cbcbcd"/>
    <!-- sphere -->
    <circle cx="464.500" cy="81.400" r="11.400" fill="url(#gs)"/>
    <!-- cylinder -->
    <path d="M486.300 73.100 V89.200 A8.750 3.600 0 0 0 503.800 89.200 V73.100Z" fill="url(#gy)"/>
    <ellipse cx="495.050" cy="73.100" rx="8.750" ry="3.900" fill="#dddddf"/>
    <!-- point light -->
    <g fill="#d6d6d6">
      <circle cx="537.600" cy="80.800" r="4.900"/>
      <path d="M537.6 75.8 L537.6 73.3" stroke="#d6d6d6" stroke-width="0.7" stroke-opacity="0.60"/><path d="M537.6 69.9 L539.3 73.3 L535.9 73.3Z"/>
      <path d="M541.1 77.3 L542.9 75.5" stroke="#d6d6d6" stroke-width="0.7" stroke-opacity="0.60"/><path d="M545.3 73.1 L544.1 76.7 L541.7 74.3Z"/>
      <path d="M542.6 80.8 L545.1 80.8" stroke="#d6d6d6" stroke-width="0.7" stroke-opacity="0.60"/><path d="M548.5 80.8 L545.1 82.5 L545.1 79.1Z"/>
      <path d="M541.1 84.3 L542.9 86.1" stroke="#d6d6d6" stroke-width="0.7" stroke-opacity="0.60"/><path d="M545.3 88.5 L541.7 87.3 L544.1 84.9Z"/>
      <path d="M537.6 85.8 L537.6 88.3" stroke="#d6d6d6" stroke-width="0.7" stroke-opacity="0.60"/><path d="M537.6 91.7 L535.9 88.3 L539.3 88.3Z"/>
      <path d="M534.1 84.3 L532.3 86.1" stroke="#d6d6d6" stroke-width="0.7" stroke-opacity="0.60"/><path d="M529.9 88.5 L531.1 84.9 L533.5 87.3Z"/>
      <path d="M532.6 80.8 L530.1 80.8" stroke="#d6d6d6" stroke-width="0.7" stroke-opacity="0.60"/><path d="M526.7 80.8 L530.1 79.1 L530.1 82.5Z"/>
      <path d="M534.1 77.3 L532.3 75.5" stroke="#d6d6d6" stroke-width="0.7" stroke-opacity="0.60"/><path d="M529.9 73.1 L533.5 74.3 L531.1 76.7Z"/>
      <!-- spot light -->
      <circle cx="562.600" cy="76.400" r="5.600"/>
      <path d="M562.6 76.4 L576.1 77.0" stroke="#d6d6d6" stroke-width="0.7" stroke-opacity="0.70"/><path d="M579.7 77.2 L576.0 78.8 L576.2 75.2Z"/>
      <path d="M562.6 76.4 L575.3 81.8" stroke="#d6d6d6" stroke-width="0.7" stroke-opacity="0.70"/><path d="M578.6 83.2 L574.6 83.4 L576.0 80.1Z"/>
      <path d="M562.6 76.4 L572.0 85.9" stroke="#d6d6d6" stroke-width="0.7" stroke-opacity="0.70"/><path d="M574.5 88.5 L570.7 87.2 L573.3 84.7Z"/>
      <path d="M562.6 76.4 L567.9 88.3" stroke="#d6d6d6" stroke-width="0.7" stroke-opacity="0.70"/><path d="M569.4 91.6 L566.3 89.0 L569.6 87.6Z"/>
      <!-- directional -->
      <path d="M602.7 70.6 L591.7 78.4" stroke="#d6d6d6" stroke-width="1.5" stroke-opacity="1.00"/><path d="M588.1 80.9 L590.6 76.8 L592.8 79.9Z"/>
      <path d="M602.7 79.0 L591.7 86.8" stroke="#d6d6d6" stroke-width="1.5" stroke-opacity="1.00"/><path d="M588.1 89.3 L590.6 85.2 L592.8 88.3Z"/>
      <path d="M610.8 81.4 L599.7 89.1" stroke="#d6d6d6" stroke-width="1.5" stroke-opacity="1.00"/><path d="M596.1 91.6 L598.6 87.5 L600.8 90.7Z"/>
    </g>
    <!-- camera -->
    <path d="M633.200 73 H641.600 L642.700 71.500 Q643.100 71 643.800 71 H648.200 Q648.900 71 649.400 71.500 L651.600 73.600 Q653 74.500 653 76.200 V87.800 Q653 91 649.800 91 H633.200 Q630 91 630 87.800 V76.200 Q630 73 633.200 73Z" fill="#d2d2d2"/>
    <circle cx="641.300" cy="82.700" r="4.200" fill="none" stroke="#ffffff" stroke-width="2.800"/>
    <!-- separators -->
    <path d="M413 69 V94 M517.200 69 V94 M621.200 69 V94" stroke="#c4c4c4" stroke-width="1.6" fill="none"/>
  </svg>
  <!-- bottom bar -->
  <svg class="abs" style="left:130px;top:654px" width="60" height="22" viewBox="400 716 60 22">
    <path d="M404 718 h5 v17 h-5Z M412 718 h5 v17 h-5Z" fill="#dadada"/>
    <path d="M441 718 L449 726.500 L441 735Z M450 718 h5 v17 h-5Z" fill="#9c9c9c"/>
  </svg>
  <span class="t bl" id="b1" style="letter-spacing:0.18px;margin-left:-0.6px;left:194px;top:658px">Steps:</span>
  <span class="t bl" id="b2" style="left:242px;top:658px">1</span>
  <svg class="abs" style="left:253px;top:667px" width="9" height="6" viewBox="0 0 9 6"><path d="M0.800 0.600 H8.200 L4.500 5.200Z" fill="#cfcfcf"/></svg>
  <span class="t bl" id="b3" style="letter-spacing:0.09px;margin-left:-0.6px;left:281px;top:658px">Real Time Factor:</span>
  <div class="fld" style="left:401px;width:90px"><span class="t" id="f1" style="margin-left:-0.6px;left:3.500px;top:2px">0.95</span></div>
  <span class="t bl" id="b4" style="letter-spacing:0.2px;margin-left:-1px;left:497px;top:658px">Sim Time:</span>
  <div class="fld" style="left:567px;width:110px"><span class="t" id="f2" style="left:2.500px;top:2px">00 00:05:28.305</span></div>
  <span class="t bl" id="b5" style="letter-spacing:0.11px;left:683px;top:658px">Real Time:</span>
  <div class="fld" style="left:758px;width:110px;overflow:hidden"><span class="t" id="f3" style="margin-left:-1px;left:0;top:2px">00 00:05:42.888</span></div>
  <span class="t bl" id="b6" style="letter-spacing:0.56px;margin-left:-0.5px;left:874px;top:658px">Iterations:</span>
  <div class="fld" style="left:949px;width:110px"><span class="t" id="f4" style="letter-spacing:0.34px;margin-left:-1.7px;left:4px;top:2px">328305</span></div>
  <div class="abs" style="left:1067px;top:654px;width:60px;height:22px;background:#4b4b4b;border:1px solid #8e8e8e;border-left-width:2px;border-right:none"></div>
  <span class="t bl" id="b7" style="left:1072px;top:658px">Reset</span>
</div>
</body>
</html>
